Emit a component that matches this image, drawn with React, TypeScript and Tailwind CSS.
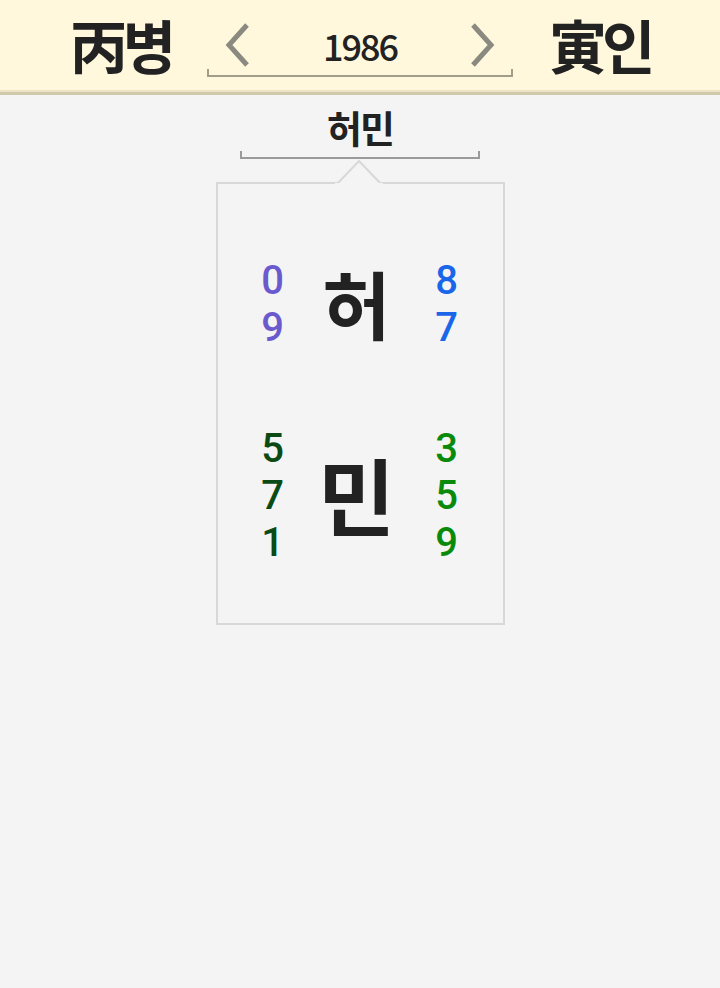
import React from "react";

const font = {
  fontFamily: '"Noto Sans CJK KR", "Noto Sans", sans-serif',
};

const digitFont = {
  fontFamily: 'Roboto, "Liberation Sans", sans-serif',
};

type Row = { left: string[]; right: string[]; char: string; lc: string; rc: string; size: string };

const rows: Row[] = [
  { left: ["0", "9"], right: ["8", "7"], char: "허", lc: "text-[#6a5acd]", rc: "text-[#1a66e8]", size: "text-[74px]" },
  { left: ["5", "7", "1"], right: ["3", "5", "9"], char: "민", lc: "text-[#0b4a14]", rc: "text-[#0a8a0a]", size: "text-[84px]" },
];

function Chevron({ dir }: { dir: "left" | "right" }) {
  return (
    <svg width="26" height="44" viewBox="0 0 26 44" className="shrink-0">
      <polyline
        points={dir === "left" ? "22,2 4,22 22,42" : "4,2 22,22 4,42"}
        fill="none"
        stroke="#8a8a80"
        strokeWidth="5"
      />
    </svg>
  );
}

function Digits({ list, color }: { list: string[]; color: string }) {
  return (
    <div className={`flex flex-col items-center w-[24px] ${color}`} style={digitFont}>
      {list.map((d, i) => (
        <div key={i} className="h-[47px] text-[40px] font-medium leading-[47px]">
          {d}
        </div>
      ))}
    </div>
  );
}

export default function App() {
  return (
    <div className="min-h-[988px] w-full bg-[#f4f4f4] text-[#222]" style={font}>
      {/* header */}
      <div className="h-[90px] bg-[#fff8dc] flex items-center justify-center">
        <div className="text-[58px] font-bold leading-none tracking-[-5px] pb-[2px]">丙병</div>
        <div className="mx-[36px] w-[306px] flex flex-col pt-[10px]">
          <div className="flex items-center justify-between px-[18px]">
            <Chevron dir="left" />
            <span className="text-[36px] font-medium leading-none tracking-[-2px]">1986</span>
            <Chevron dir="right" />
          </div>
          <div className="h-[8px] mt-[2px] border-x-2 border-b-2 border-[#a09e88]" />
        </div>
        <div className="text-[58px] font-bold leading-none tracking-[-5px] pb-[2px]">寅인</div>
      </div>
      <div className="h-[2px] bg-[#ebe3c4]" />
      <div className="h-[3px] bg-[#cfc8aa]" />

      {/* name */}
      <div className="flex flex-col items-center pt-[10px]">
        <div className="text-[38px] font-bold leading-[44px] tracking-[-2px]">허민</div>
        <div className="w-[240px] h-[8px] mt-[2px] border-x-2 border-b-2 border-[#9a9a9a]" />

        {/* card */}
        <div className="relative mt-[23px] w-[289px] border-2 border-[#d8d8d8] pt-[73px] pb-[57px] flex flex-col gap-[74px]">
          <div className="absolute left-[117px] -top-[25px] w-[48px] h-[26px] overflow-hidden">
            <svg width="48" height="26" viewBox="0 0 48 26">
              <polygon points="1,26 24,2 47,26" fill="#f4f4f4" stroke="#d8d8d8" strokeWidth="2" />
              <rect x="0" y="24" width="48" height="2" fill="#f4f4f4" />
            </svg>
          </div>
          {rows.map((r) => (
            <div key={r.char} className="flex items-center pl-[43px]">
              <Digits list={r.left} color={r.lc} />
              <div className={`ml-[22px] w-[100px] ${r.size} font-bold leading-none text-center -translate-y-[2px]`}>
                {r.char}
              </div>
              <div className="ml-[28px]">
                <Digits list={r.right} color={r.rc} />
              </div>
            </div>
          ))}
        </div>
      </div>
    </div>
  );
}
